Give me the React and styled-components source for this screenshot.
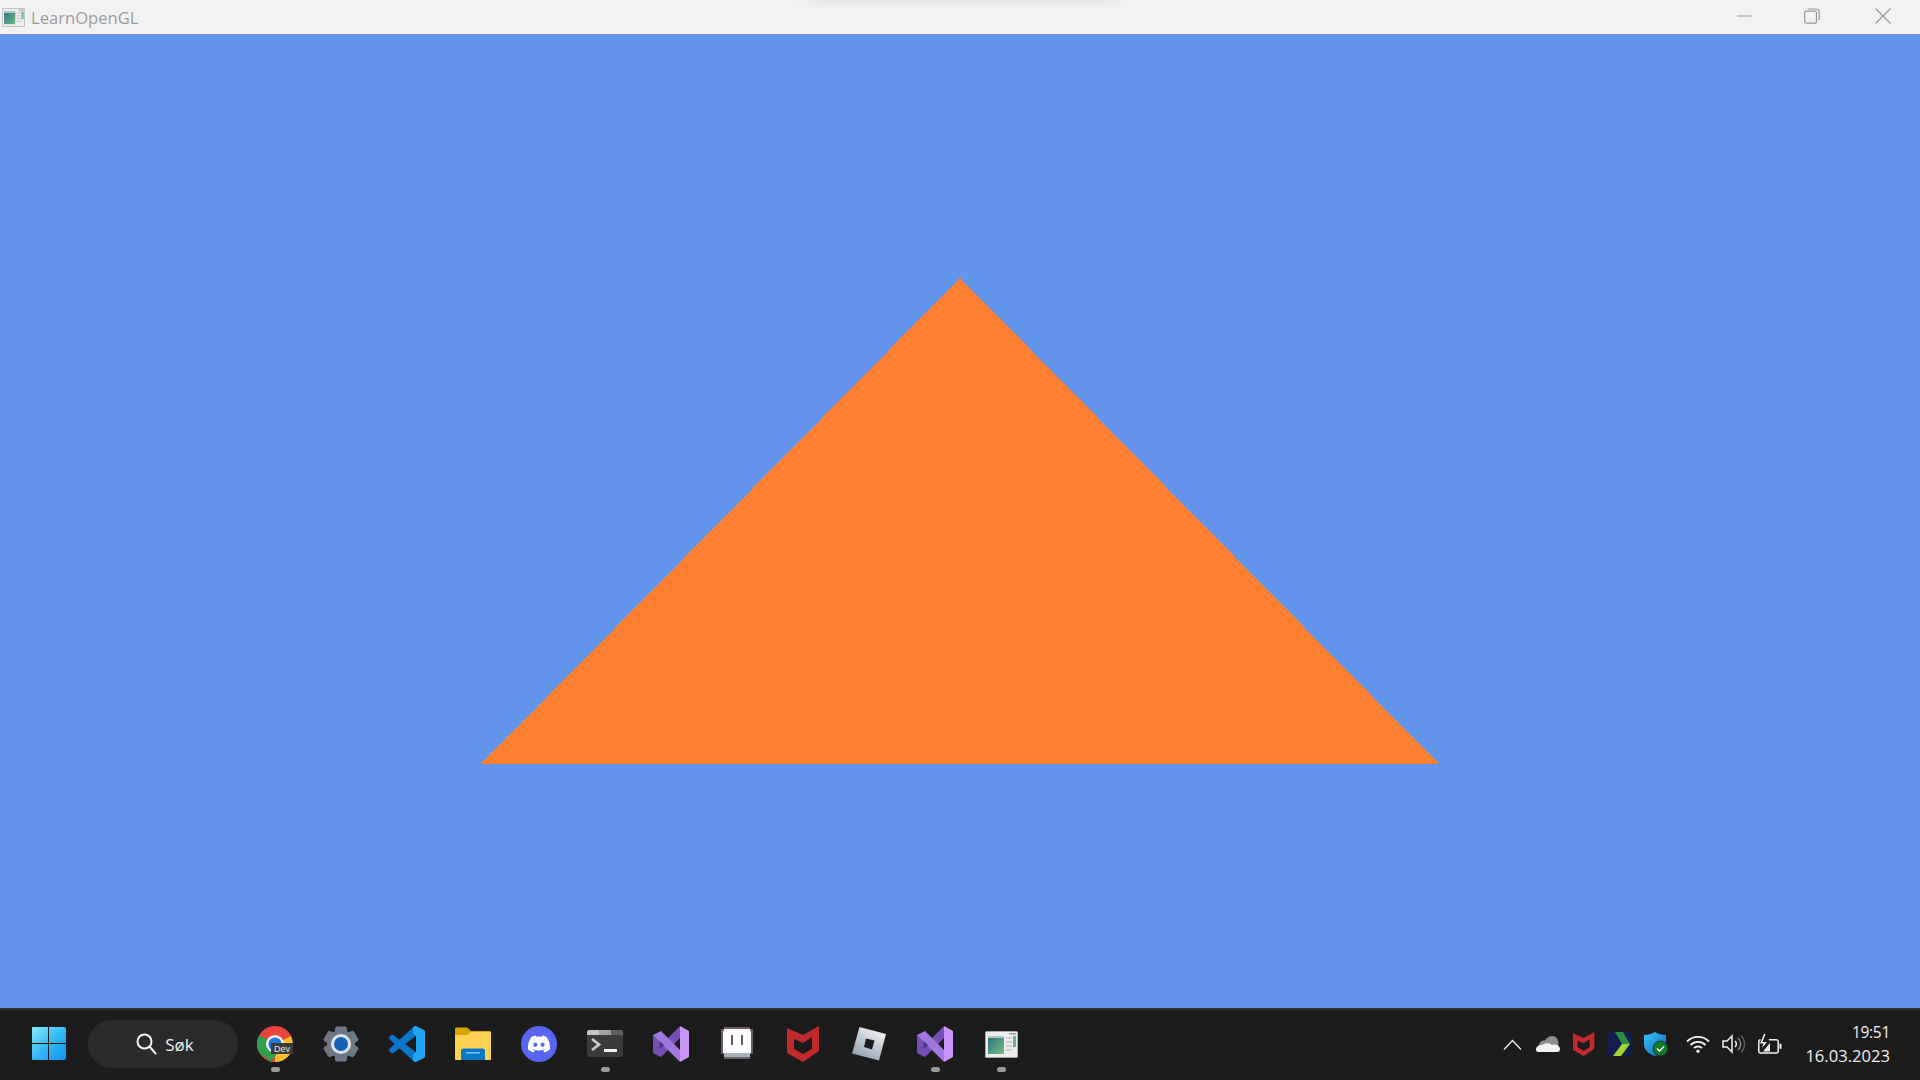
import React from "react";
import styled, { createGlobalStyle } from "styled-components";
import { FaDiscord } from "react-icons/fa";

const Global = createGlobalStyle`
  html, body { margin: 0; padding: 0; overflow: hidden; background: #1c1c1c; }
  * { box-sizing: border-box; }
`;

const Screen = styled.div`
  width: 1920px;
  height: 1080px;
  display: flex;
  flex-direction: column;
  position: relative;
  font-family: "Open Sans", "Noto Sans", sans-serif;
`;

const TitleBar = styled.header`
  height: 34px;
  flex: none;
  display: flex;
  align-items: center;
  background: #f2f2f2;
  padding-left: 2px;
  position: relative;
`;

const PeekShadow = styled.div`
  position: absolute;
  left: 796px;
  top: 0;
  width: 330px;
  height: 10px;
  background: linear-gradient(to bottom, #e5e5e5, #f2f2f2);
  -webkit-mask-image: linear-gradient(to right, transparent, #000 8%, #000 92%, transparent);
  mask-image: linear-gradient(to right, transparent, #000 8%, #000 92%, transparent);
`;

const TitleText = styled.span`
  margin-left: 6px;
  font-size: 16.6px;
  color: #9a9a9a;
`;

const WindowControls = styled.div`
  margin-left: auto;
  display: flex;
  height: 100%;
`;

const ControlBtn = styled.div`
  width: ${(p) => (p.$wide ? 74 : 68)}px;
  display: flex;
  align-items: center;
  justify-content: center;
  padding-bottom: 2px;
`;

const Canvas = styled.main`
  flex: 1;
  min-height: 0;
  background: #6495ed;
`;

const GlView = styled.svg`
  display: block;
  width: 100%;
  height: 100%;
`;

const Taskbar = styled.footer`
  height: 72px;
  flex: none;
  display: flex;
  align-items: stretch;
  background: #1c1c1c;
  border-top: 2px solid #333436;
  padding: 0 30px 2px 16px;
`;

const Slot = styled.div`
  width: ${(p) => p.$w || 66}px;
  flex: none;
  display: flex;
  align-items: center;
  justify-content: center;
  position: relative;
`;

const RunningDot = styled.span`
  position: absolute;
  left: 50%;
  bottom: 6px;
  width: 9px;
  height: 5px;
  margin-left: -4.5px;
  border-radius: 3px;
  background: #9b9b9b;
`;

const SearchBox = styled.div`
  width: 150px;
  height: 48px;
  align-self: center;
  flex: none;
  margin: 0 4px 0 6px;
  border-radius: 24px;
  background: #2b2b2b;
  display: flex;
  align-items: center;
  justify-content: center;
  gap: 8px;
  color: #f0f0f0;
  font-size: 17px;
  padding-left: 4px;
`;

const Tray = styled.div`
  margin-left: auto;
  display: flex;
  align-items: stretch;
`;

const TrayGap = styled.div`
  width: 6px;
`;

const Clock = styled.div`
  width: 102px;
  display: flex;
  flex-direction: column;
  align-items: flex-end;
  justify-content: center;
  color: #efefef;
  line-height: 23px;
`;

const ClockTime = styled.span`
  font-size: 15.5px;
  letter-spacing: -0.3px;
`;

const ClockDate = styled.span`
  font-size: 16.6px;
`;

const StartIcon = () => (
  <svg width="36" height="36" viewBox="0 0 36 36">
    <defs>
      <linearGradient id="st" x1="0" y1="0" x2="1" y2="1">
        <stop offset="0" stopColor="#86eaff" />
        <stop offset="0.5" stopColor="#36b9f5" />
        <stop offset="1" stopColor="#0a93f2" />
      </linearGradient>
    </defs>
    <path
      fill="url(#st)"
      d="M1 2a1 1 0 0 1 1-1h15v16H1zM18 1h15a2 2 0 0 1 2 2v14H18zM1 18h16v16H2a1 1 0 0 1-1-1zM18 18h17v14a2 2 0 0 1-2 2H18z"
    />
  </svg>
);

const ChromeDev = () => (
  <svg width="36" height="36" viewBox="0 0 36 36">
    <circle cx="18" cy="18" r="18" fill="#e8453c" />
    <path d="M18 18 L18 36 A18 18 0 0 0 36 18 L34 10 Z" fill="#fbc02d" />
    <path d="M18 18 L2.4 9 A18 18 0 0 0 2.4 27 L14 36 L22 25 Z" fill="#2f9e4d" />
    <circle cx="18" cy="18" r="9" fill="#f2f2f2" />
    <circle cx="18" cy="18" r="6.6" fill="#2a77e0" />
    <rect x="14" y="17" width="22" height="11" fill="#3a3a3a" />
    <text x="25" y="26" textAnchor="middle" fontSize="9" fontFamily="Liberation Sans, sans-serif" fill="#e6e6e6">
      Dev
    </text>
  </svg>
);

const GearIcon = () => (
  <svg width="36" height="36" viewBox="0 0 36 36">
    <g fill="#6f7985">
      <rect x="12" y="0.5" width="12" height="35" rx="2.5" />
      <rect x="12" y="0.5" width="12" height="35" rx="2.5" transform="rotate(60 18 18)" />
      <rect x="12" y="0.5" width="12" height="35" rx="2.5" transform="rotate(120 18 18)" />
      <circle cx="18" cy="18" r="14" />
    </g>
    <circle cx="18" cy="18" r="10" fill="#dfe3e8" />
    <circle cx="18" cy="18" r="7" fill="#1461b5" />
  </svg>
);

const VsCodeIcon = () => (
  <svg width="36" height="36" viewBox="0 0 24 24">
    <defs>
      <clipPath id="vsr">
        <rect x="16" y="0" width="8" height="24" />
      </clipPath>
    </defs>
    <path
      fill="#0a78c8"
      d="M23.15 2.587L18.21.21a1.494 1.494 0 0 0-1.705.29l-9.46 8.63-4.12-3.128a.999.999 0 0 0-1.276.057L.327 7.261A1 1 0 0 0 .326 8.74L3.899 12 .326 15.26a1 1 0 0 0 .001 1.479L1.65 17.94a.999.999 0 0 0 1.276.057l4.12-3.128 9.46 8.63a1.492 1.492 0 0 0 1.704.29l4.942-2.377A1.5 1.5 0 0 0 24 20.06V3.939a1.5 1.5 0 0 0-.85-1.352zm-5.146 14.861L10.826 12l7.178-5.448v10.896z"
    />
    <path
      clipPath="url(#vsr)"
      fill="#1fa5f3"
      d="M23.15 2.587L18.21.21a1.494 1.494 0 0 0-1.705.29L16 1v4l2 1.5v11L16 19v4l.5.5a1.492 1.492 0 0 0 1.704.29l4.942-2.377A1.5 1.5 0 0 0 24 20.06V3.939a1.5 1.5 0 0 0-.85-1.352z"
    />
  </svg>
);

const FolderIcon = () => (
  <svg width="36" height="34" viewBox="0 0 36 34">
    <path d="M0 2a1.5 1.5 0 0 1 1.500-1.500H12L16 4h19a1 1 0 0 1 1 1v6H0z" fill="#dca300" />
    <path d="M0 8h12l4-3h19a1 1 0 0 1 1 1v26a1 1 0 0 1-1 1H1a1 1 0 0 1-1-1z" fill="#ffd254" />
    <path d="M6 33V24a2.500 2.500 0 0 1 2.500-2.500h19A2.500 2.500 0 0 1 30 24v9z" fill="#0a78c9" />
    <rect x="11" y="25" width="14" height="1.500" fill="#7cc4f2" />
  </svg>
);

const DiscordBadge = styled.div`
  width: 36px;
  height: 36px;
  border-radius: 50%;
  background: #5865f2;
  color: #fff;
  display: flex;
  align-items: center;
  justify-content: center;
`;

const TerminalIcon = () => (
  <svg width="36" height="28" viewBox="0 0 36 28">
    <rect width="36" height="27" rx="2" fill="#3b3b3b" />
    <path d="M0 2a2 2 0 0 1 2-2h10v5H0z" fill="#c4c4c4" />
    <rect x="12" y="0" width="12" height="5" fill="#a0a0a0" />
    <path d="M24 0h10a2 2 0 0 1 2 2v3H24z" fill="#5f5f5f" />
    <path d="M5 9l7 5.500-7 5.500" fill="none" stroke="#c8c8c8" strokeWidth="2.800" />
    <rect x="17" y="19" width="13" height="3" fill="#f2f2f2" />
  </svg>
);

const VisualStudioIcon = () => (
  <svg width="36" height="36" viewBox="0 0 36 36">
    <path d="M0 9V27L8 31 27 12V0L13 14 8 9Z" fill="#7650b6" />
    <path d="M0 9L8 5 27 24V36Z" fill="#a078df" />
    <path d="M6.500 15L11 19 6.500 23Z" fill="#4a3574" />
    <path d="M27 0L36 5V31L27 36Z" fill="#c894f6" />
  </svg>
);

const PixelApp = () => (
  <svg width="32" height="34" viewBox="0 0 32 34" shapeRendering="crispEdges">
    <path d="M3 0h26v2h3v25h-3v5H3v-5H0V2h3z" fill="#6c5a68" />
    <path d="M3 2h26v2h1v22H2V4h1z" fill="#fff" />
    <rect x="3" y="26" width="26" height="4" fill="#a9b4ba" />
    <rect x="10" y="8" width="2" height="10" fill="#6c5a68" />
    <rect x="20" y="8" width="2" height="10" fill="#6c5a68" />
  </svg>
);

const McAfeeIcon = ({ size = 36 }) => (
  <svg width={(size * 32) / 36} height={size} viewBox="0 0 32 36">
    <path
      fillRule="evenodd"
      fill="#c12b2b"
      d="M0 2L16 9 32 0V25L16 36 0 27ZM7 13V23L16 28 25 23V11L16 17Z"
    />
  </svg>
);

const RobloxIcon = () => (
  <svg width="36" height="36" viewBox="0 0 36 36">
    <defs>
      <linearGradient id="rb" x1="0.8" y1="0" x2="0.2" y2="1">
        <stop offset="0" stopColor="#f6f7f8" />
        <stop offset="1" stopColor="#8d9bab" />
      </linearGradient>
    </defs>
    <path
      fillRule="evenodd"
      fill="url(#rb)"
      d="M8.500 1L35 8 28 34.500 1 27.500ZM15 12.500L13 21 21 23.500 23.500 14.500Z"
    />
  </svg>
);

const AppWindowIcon = ({ w = 33, h = 27 }) => (
  <svg width={w} height={h} viewBox="0 0 33 27">
    <defs>
      <linearGradient id="apw" x1="0" y1="0" x2="1" y2="1">
        <stop offset="0" stopColor="#26727f" />
        <stop offset="1" stopColor="#74bd84" />
      </linearGradient>
    </defs>
    <rect x="0.500" y="0.500" width="32" height="26" rx="1" fill="#eeeeee" stroke="#a8a8a8" />
    <rect x="3" y="5" width="16" height="18" fill="url(#apw)" />
    <rect x="3" y="5" width="16" height="2" fill="#b8c8c8" />
    <rect x="21" y="6" width="6" height="2" fill="#cfcfcf" />
    <rect x="21" y="10" width="6" height="2" fill="#cfcfcf" />
    <rect x="21" y="14" width="6" height="2" fill="#cfcfcf" />
    <rect x="21" y="18" width="6" height="2" fill="#cfcfcf" />
    <rect x="28" y="5" width="3" height="11" fill="#62b58c" />
    <rect x="24" y="2" width="7" height="1.500" fill="#9a9a9a" />
  </svg>
);

const SearchGlyph = () => (
  <svg width="21" height="22" viewBox="0 0 21 22" fill="none" stroke="#f4f4f4" strokeWidth="2">
    <circle cx="8.500" cy="8.500" r="7" />
    <path d="M13.500 13.500L20 21" />
  </svg>
);

const ChevronUp = () => (
  <svg width="19" height="11" viewBox="0 0 19 11" fill="none" stroke="#f0f0f0" strokeWidth="1.300">
    <path d="M1 10.500L9.500 1.500 18 10.500" />
  </svg>
);

const OneDrive = () => (
  <svg width="24" height="16" viewBox="0 0 24 16">
    <path d="M3 10C3 6 6 4 9 4.500 11 1 14 0 16 0c4 0 6 3 6.500 6L22 10Z" fill="#8e8e8e" />
    <path
      d="M2.500 16A2.500 2.500 0 0 1 0 13.500C0 10.500 3 8.500 6 9 9 6.500 14 6.500 16 9 20 7.500 24 10 24 13a3 3 0 0 1-2.500 3Z"
      fill="#f4f4f4"
    />
  </svg>
);

const GreenArrow = () => (
  <svg width="24" height="24" viewBox="0 0 24 24">
    <rect width="24" height="24" fill="#151d52" />
    <path d="M7 0h8l7 12h-8z" fill="#2f8f45" />
    <path d="M14 12h8L13 24H5z" fill="#a3d52f" />
  </svg>
);

const DefenderShield = () => (
  <svg width="24" height="24" viewBox="0 0 24 24">
    <defs>
      <linearGradient id="shd" x1="0" y1="0" x2="1" y2="1">
        <stop offset="0" stopColor="#37c6f4" />
        <stop offset="1" stopColor="#0b62c4" />
      </linearGradient>
    </defs>
    <path d="M11 0c3 2 7 3 11 3v9c0 6-5 10-11 12C5 22 0 18 0 12V3c4 0 8-1 11-3z" fill="url(#shd)" />
    <circle cx="16.500" cy="16.500" r="7.500" fill="#107c2a" stroke="#1c1c1c" strokeWidth="0.800" />
    <path d="M13 16.500l2.500 2.500 4.500-4.500" fill="none" stroke="#fff" strokeWidth="1.500" />
  </svg>
);

const WifiGlyph = () => (
  <svg width="24" height="18" viewBox="0 0 24 18" fill="none" stroke="#f2f2f2" strokeWidth="1.800">
    <path d="M1 6.500a15.500 15.500 0 0 1 22 0" />
    <path d="M4.500 10a10.500 10.500 0 0 1 15 0" />
    <path d="M8 13.200a5.600 5.600 0 0 1 8 0" />
    <circle cx="12" cy="16.200" r="1.700" fill="#f2f2f2" stroke="none" />
  </svg>
);

const VolumeGlyph = () => (
  <svg width="24" height="20" viewBox="0 0 24 20" fill="none" strokeWidth="1.500">
    <path d="M1 7h4l5-5v16l-5-5H1z" stroke="#f2f2f2" />
    <path d="M13 7a4 4 0 0 1 0 6" stroke="#f2f2f2" />
    <path d="M16 4a8 8 0 0 1 0 12" stroke="#8a8a8a" />
    <path d="M19 1.500a12 12 0 0 1 0 17" stroke="#5c5c5c" />
  </svg>
);

const BatteryGlyph = () => (
  <svg width="24" height="20" viewBox="0 0 24 20">
    <path
      d="M11 5.800h7.500a1.700 1.700 0 0 1 1.700 1.700v9.800a1.700 1.700 0 0 1-1.700 1.700H2.500A1.700 1.700 0 0 1 .8 17.300V7.500a1.700 1.700 0 0 1 1.700-1.700"
      fill="none"
      stroke="#f2f2f2"
      strokeWidth="1.500"
    />
    <rect x="21.500" y="9.500" width="2" height="5.500" rx="1" fill="#f2f2f2" />
    <path d="M7.500 0L4.500 8H9L4 14 5.500 9.500H2L6 0Z" fill="#f2f2f2" />
    <path d="M5 17.500L12 9V17.500Z" fill="#f2f2f2" />
  </svg>
);

const MinimizeGlyph = () => (
  <svg width="15" height="2" viewBox="0 0 15 2">
    <rect width="15" height="1" y="0.500" fill="#9a9a9a" />
  </svg>
);

const RestoreGlyph = () => (
  <svg width="16" height="16" viewBox="0 0 16 16" fill="none" stroke="#969696" strokeWidth="1.200">
    <rect x="0.700" y="3.200" width="11.800" height="12" rx="2" />
    <path d="M3.500 1H12a3 3 0 0 1 3.200 3v8" />
  </svg>
);

const CloseGlyph = () => (
  <svg width="16" height="16" viewBox="0 0 16 16" stroke="#969696" strokeWidth="1.200">
    <path d="M.5.500l15 15M15.500.500l-15 15" />
  </svg>
);

const pinned = [
  { key: "chrome", icon: <ChromeDev />, running: true },
  { key: "settings", icon: <GearIcon /> },
  { key: "vscode", icon: <VsCodeIcon /> },
  { key: "explorer", icon: <FolderIcon /> },
  {
    key: "discord",
    icon: (
      <DiscordBadge>
        <FaDiscord size={24} />
      </DiscordBadge>
    ),
  },
  { key: "terminal", icon: <TerminalIcon />, running: true },
  { key: "vs", icon: <VisualStudioIcon /> },
  { key: "pixel", icon: <PixelApp /> },
  { key: "mcafee", icon: <McAfeeIcon /> },
  { key: "roblox", icon: <RobloxIcon /> },
  { key: "vs2", icon: <VisualStudioIcon />, running: true },
  { key: "app", icon: <AppWindowIcon />, running: true },
];

const App = () => (
  <Screen>
    <Global />
    <TitleBar>
      <AppWindowIcon w={23} h={19} />
      <TitleText>LearnOpenGL</TitleText>
      <PeekShadow />
      <WindowControls>
        <ControlBtn>
          <MinimizeGlyph />
        </ControlBtn>
        <ControlBtn>
          <RestoreGlyph />
        </ControlBtn>
        <ControlBtn $wide>
          <CloseGlyph />
        </ControlBtn>
      </WindowControls>
    </TitleBar>
    <Canvas>
      <GlView viewBox="-1 -1 2 2" preserveAspectRatio="none">
        <polygon points="-0.499,0.499 0.499,0.499 0,-0.499" fill="#ff7f33" shapeRendering="crispEdges" />
      </GlView>
    </Canvas>
    <Taskbar>
      <Slot>
        <StartIcon />
      </Slot>
      <SearchBox>
        <SearchGlyph />
        <span>Søk</span>
      </SearchBox>
      {pinned.map((p) => (
        <Slot key={p.key}>
          {p.icon}
          {p.running && <RunningDot />}
        </Slot>
      ))}
      <Tray>
        <Slot $w={36}>
          <ChevronUp />
        </Slot>
        <Slot $w={36}>
          <OneDrive />
        </Slot>
        <Slot $w={36}>
          <McAfeeIcon size={24} />
        </Slot>
        <Slot $w={36}>
          <GreenArrow />
        </Slot>
        <Slot $w={36}>
          <DefenderShield />
        </Slot>
        <TrayGap />
        <Slot $w={36}>
          <WifiGlyph />
        </Slot>
        <Slot $w={36}>
          <VolumeGlyph />
        </Slot>
        <Slot $w={36}>
          <BatteryGlyph />
        </Slot>
        <Clock>
          <ClockTime>19:51</ClockTime>
          <ClockDate>16.03.2023</ClockDate>
        </Clock>
      </Tray>
    </Taskbar>
  </Screen>
);

export default App;
